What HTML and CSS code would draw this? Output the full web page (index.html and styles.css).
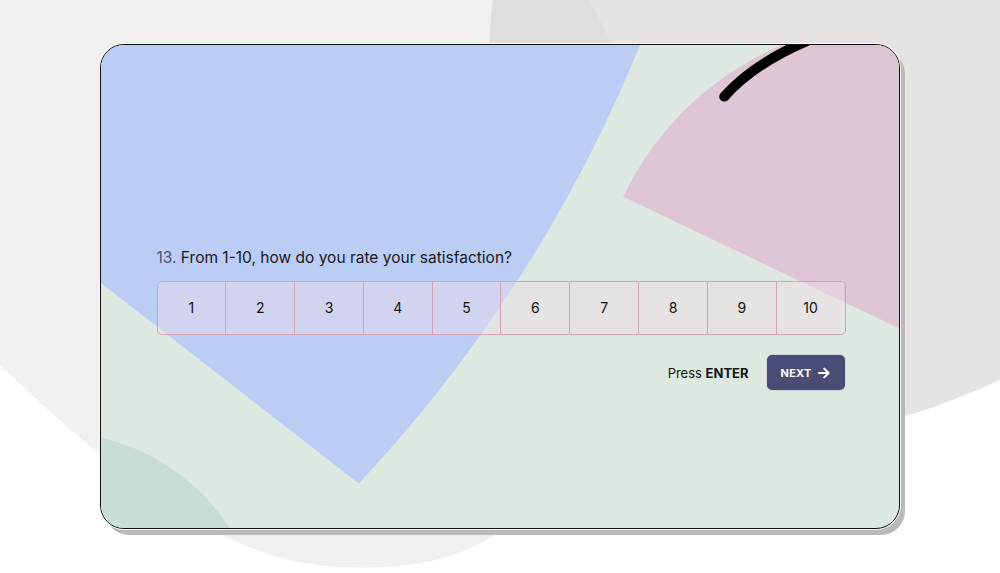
FILE: index.html
```html
<!DOCTYPE html>
<html lang="en">
<head>
<meta charset="utf-8">
<title>Survey question</title>
<link rel="stylesheet" href="styles.css">
</head>
<body>
<div class="page">
  <svg class="backdrop" viewBox="0 0 1000 573" aria-hidden="true">
    <defs>
      <clipPath id="leftBlob">
        <path d="M 0 0 H 587 C 640 60 660 300 560 470 C 500 560 420 570 343 567 C 250 565 150 510 0 365 Z"/>
      </clipPath>
    </defs>
    <path class="blob-left" d="M 0 0 H 587 C 640 60 660 300 560 470 C 500 560 420 570 343 567 C 250 565 150 510 0 365 Z"/>
    <path class="blob-right" d="M 493 0 C 480 100 500 300 600 380 C 700 460 850 450 1000 380 V 0 Z"/>
    <path class="blob-overlap" clip-path="url(#leftBlob)" d="M 493 0 C 480 100 500 300 600 380 C 700 460 850 450 1000 380 V 0 Z"/>
  </svg>

  <main class="card">
    <svg class="card-art" viewBox="101.5 45.5 797 482" preserveAspectRatio="none" aria-hidden="true">
      <path class="art-blue" d="M 90 30 H 646 L 640 45 Q 540 290 359 483 L 90 274 Z"/>
      <path class="art-pink" d="M 900 329 L 623 197 A 308 308 0 0 1 1033 51 Z"/>
      <circle class="art-green" cx="55" cy="640" r="208"/>
      <path class="art-stroke" d="M 724 97 Q 755 62 815 38"/>
    </svg>

    <div class="content">
      <h1 class="question"><span class="qnum">13.</span> From 1-10, how do you rate your satisfaction?</h1>
      <div class="scale">
        <button class="cell">1</button>
        <button class="cell">2</button>
        <button class="cell">3</button>
        <button class="cell">4</button>
        <button class="cell">5</button>
        <button class="cell">6</button>
        <button class="cell">7</button>
        <button class="cell">8</button>
        <button class="cell">9</button>
        <button class="cell">10</button>
      </div>
      <div class="actions">
        <span class="hint">Press <b>ENTER</b></span>
        <button class="next">NEXT
          <svg class="next-icon" viewBox="0 0 12 12" aria-hidden="true">
            <path d="M1 6 H10.5 M6.2 1.6 L10.6 6 L6.2 10.4"/>
          </svg>
        </button>
      </div>
    </div>
  </main>
</div>
</body>
</html>
```

FILE: styles.css
```css
html, body {
  margin: 0;
  padding: 0;
  background: #ffffff;
}

body {
  font-family: Inter, "Noto Sans", "Liberation Sans", sans-serif;
  color: #1c1c22;
}

.page {
  position: relative;
  width: 1000px;
  height: 573px;
  overflow: hidden;
  box-sizing: border-box;
  padding: 44px 0 0 100px;
  display: flex;
  align-items: flex-start;
}

.backdrop {
  position: absolute;
  left: 0;
  top: 0;
  width: 1000px;
  height: 573px;
}

.blob-left { fill: #f0f0f0; }
.blob-right { fill: #e5e4e3; }
.blob-overlap { fill: #dfdedd; }

.card {
  position: relative;
  box-sizing: border-box;
  width: 800px;
  height: 485px;
  border: 1.5px solid #111111;
  border-radius: 24px;
  background: #dde8e0;
  overflow: hidden;
  box-shadow: 0 0 0 1px #f6f6f6, 5px 6px 0 0 #b9b9b9;
}

.card-art {
  position: absolute;
  left: 0;
  top: 0;
  width: 100%;
  height: 100%;
}

.art-blue { fill: #bccdf5; }
.art-pink { fill: #dfc6d4; }
.art-green { fill: #c8ddd4; }
.art-stroke {
  fill: none;
  stroke: #000000;
  stroke-width: 10;
  stroke-linecap: round;
}

.content {
  position: relative;
  width: 689px;
  padding: 202.5px 0 0 55.5px;
}

.question {
  margin: 0;
  font-size: 15.5px;
  line-height: 20px;
  font-weight: 400;
  color: #18181e;
}

.qnum {
  color: #50556f;
}

.scale {
  margin-top: 13px;
  display: flex;
  box-sizing: border-box;
  height: 54px;
  border: 1px solid #cfa4b4;
  border-radius: 5px;
  overflow: hidden;
}

.cell {
  flex: 1;
  padding: 0;
  margin: 0;
  border: 0;
  border-left: 1px solid #cfa4b4;
  background: rgba(240, 222, 230, 0.42);
  font-family: Inter, "Noto Sans", "Liberation Sans", sans-serif;
  font-size: 14px;
  color: #111111;
}

.cell:first-child {
  border-left: 0;
}

.actions {
  margin-top: 19.5px;
  display: flex;
  justify-content: flex-end;
  align-items: center;
  gap: 17px;
}

.hint {
  font-size: 13px;
  color: #141414;
}

.hint b {
  font-weight: 700;
}

.next {
  box-sizing: border-box;
  width: 80px;
  height: 37px;
  padding: 0;
  border: 1px solid rgba(255, 255, 255, 0.75);
  border-radius: 6px;
  background: #4b4c75;
  color: #ffffff;
  font-family: Inter, "Noto Sans", "Liberation Sans", sans-serif;
  font-size: 11px;
  font-weight: 700;
  letter-spacing: 0.2px;
  display: flex;
  align-items: center;
  justify-content: center;
  gap: 7px;
}

.next-icon {
  width: 12px;
  height: 12px;
}

.next-icon path {
  fill: none;
  stroke: #ffffff;
  stroke-width: 2;
  stroke-linecap: round;
  stroke-linejoin: round;
}
```
